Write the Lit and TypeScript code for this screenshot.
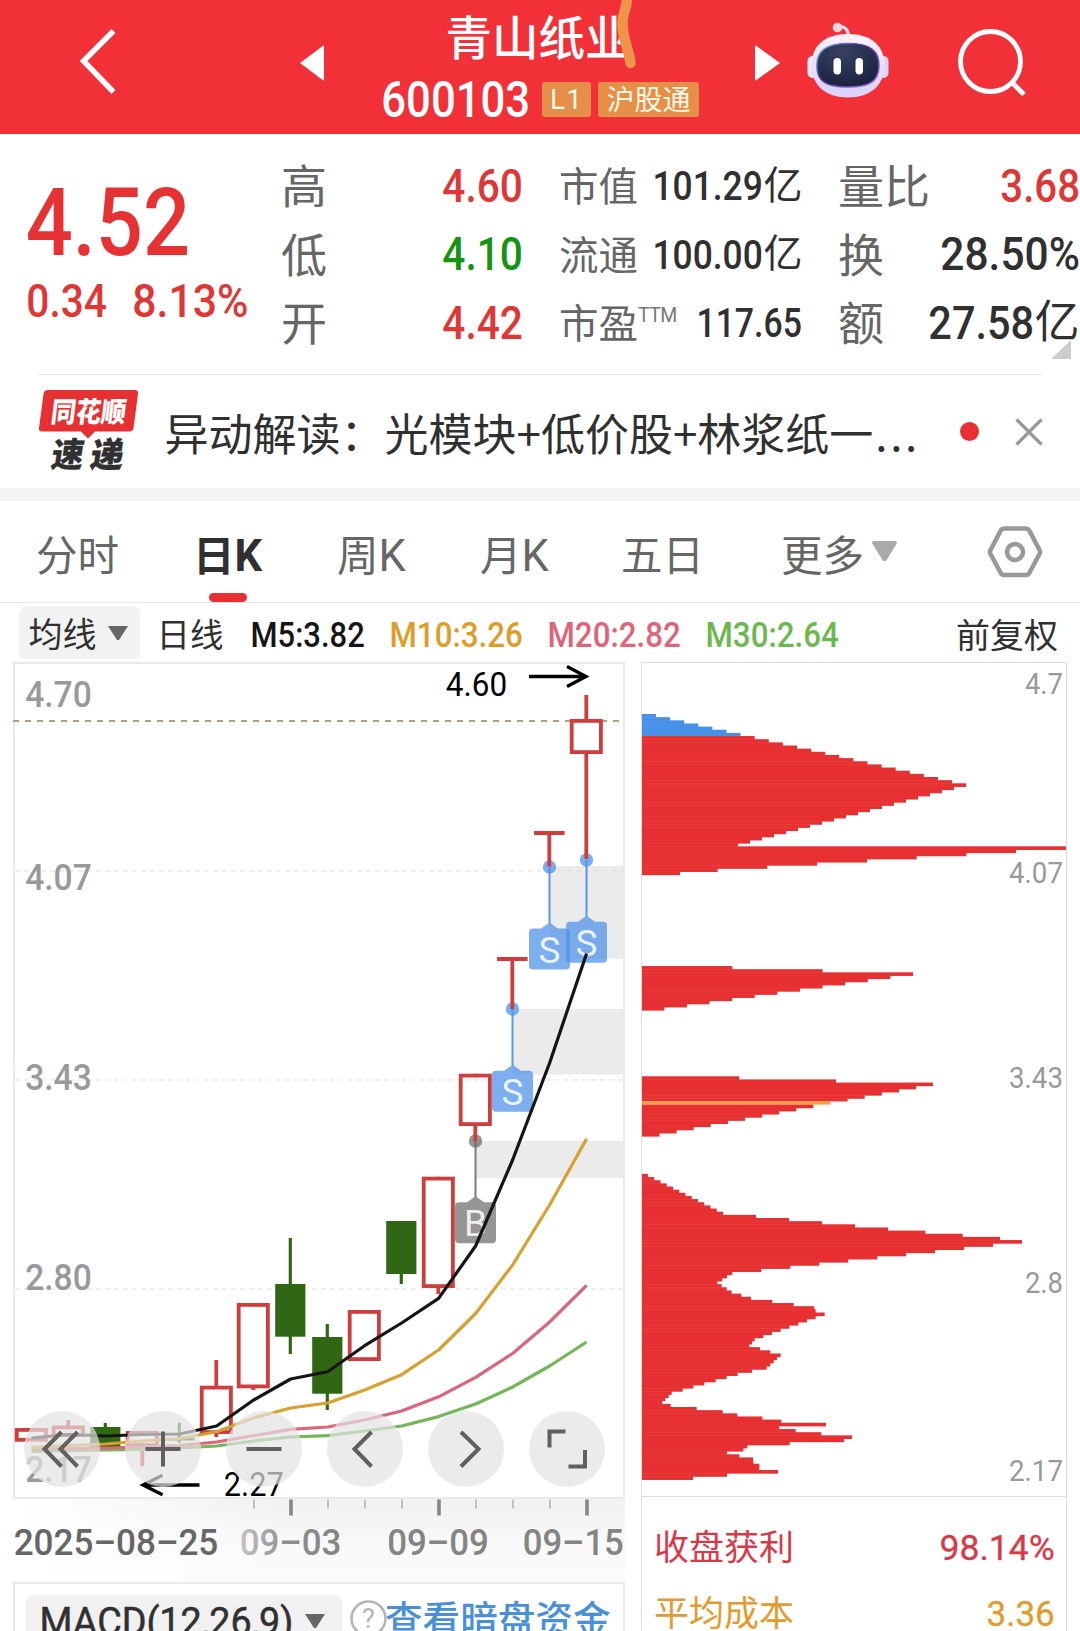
import { LitElement, html, svg, css } from "lit";
import { customElement } from "lit/decorators.js";

/* ---------- numerals: condensed figures fitted to a width and cap height ---------- */
const num = (text: string, w: number, cap: number, cls = "") => html`
  <svg class="num ${cls}" width=${w} height=${cap}>
    <text x=${-0.02 * cap} y=${cap} font-size=${cap / 0.711} textLength=${w + 0.05 * cap}
      lengthAdjust="spacingAndGlyphs">${text}</text>
  </svg>`;

const figure = (text: string, x: number, base: number, w: number, cap: number, cls: string) => svg`
  <text class=${cls} x=${x - 0.05 * cap} y=${base} font-size=${cap / 0.711}
    textLength=${w + 0.1 * cap} lengthAdjust="spacingAndGlyphs">${text}</text>`;

/* ---------- candle data (pixel space of the plot) ---------- */
const PITCH = 37;
const X0 = 31.3;
const cx = (i: number) => X0 + i * PITCH;

interface Candle { i: number; top: number; bottom: number; high: number; low: number; up: boolean; }
const candles: Candle[] = [
  { i: 0, top: 1428, bottom: 1441.7, high: 1428, low: 1441, up: true },
  { i: 1, top: 1425.5, bottom: 1437, high: 1420, low: 1437, up: true },
  { i: 2, top: 1427, bottom: 1447, high: 1423, low: 1447, up: false },
  { i: 3, top: 1431, bottom: 1447, high: 1431, low: 1466, up: true },
  { i: 4, top: 1438, bottom: 1440.5, high: 1422.7, low: 1442.7, up: false },
  { i: 5, top: 1385.7, bottom: 1434, high: 1360, low: 1437, up: true },
  { i: 6, top: 1303, bottom: 1388.3, high: 1303, low: 1390, up: true },
  { i: 7, top: 1284, bottom: 1336.7, high: 1238, low: 1354, up: false },
  { i: 8, top: 1337, bottom: 1393.7, high: 1324, low: 1410, up: false },
  { i: 9, top: 1310, bottom: 1361, high: 1310, low: 1361, up: true },
  { i: 10, top: 1221, bottom: 1274, high: 1221, low: 1284, up: false },
  { i: 11, top: 1176.7, bottom: 1288, high: 1176.7, low: 1294, up: true },
  { i: 12, top: 1073.7, bottom: 1126, high: 1073.7, low: 1141, up: true },
  { i: 15, top: 719, bottom: 754, high: 695, low: 859, up: true },
];
const limitUps = [
  { i: 13, y: 959, low: 1009 },
  { i: 14, y: 833, low: 866.5 },
];
const markers = [
  { i: 12, y: 1141, box: 1202.3, label: "B", sell: false },
  { i: 13, y: 1009, box: 1070.7, label: "S", sell: true },
  { i: 14, y: 867, box: 928.5, label: "S", sell: true },
  { i: 15, y: 860, box: 921.7, label: "S", sell: true },
];
const gaps = [
  { i: 12, y: 1141, h: 37 },
  { i: 13, y: 1009, h: 65.7 },
  { i: 14, y: 866, h: 92.7 },
];
const averages: Record<string, number[]> = {
  ma30: [1451.5, 1450.7, 1450, 1449.3, 1448, 1446, 1441, 1437, 1435.7, 1431, 1426, 1416.6, 1404, 1387, 1366, 1342],
  ma20: [1449, 1448.7, 1448, 1447, 1445.5, 1442, 1435.7, 1429.3, 1427, 1420, 1411, 1396.8, 1377.3, 1353.5, 1322, 1285.3],
  ma10: [1447.3, 1445.7, 1444, 1441, 1438.5, 1431.7, 1418, 1408, 1403, 1390, 1374.7, 1350, 1313.5, 1265, 1205, 1138.7],
  ma5: [1438, 1434.5, 1436, 1434.5, 1434, 1426, 1400, 1379, 1371.7, 1345.7, 1323, 1298.3, 1246, 1160, 1063, 953.5],
};

/* ---------- chip distribution: row index -> bar widths in thirds of a pixel ---------- */
const run = (from: number, step: number, n: number) => Array.from({ length: n }, (_, k) => from + step * k);
const chips: { row: number; ends: number[] }[] = [
  { row: 0, ends: [...run(78, 42.3, 23), ...run(972, -36, 19), 1308, 1158, 1009, 860, 711, 561, 412, 263, 150] },
  { row: 80, ends: [307, 578, 849, ...run(781, -67.8, 11)] },
  { row: 115, ends: [327, 618, 909, ...run(858, -51.3, 16)] },
  { row: 146, ends: [
    ...run(54, 18.75, 13), 378, 477, 576, 675, 774, 886, 998, 1110, 1176,
    ...run(1089, -86.9, 10), 291, 277, 262, 275, 290, 305, 334, 363, 427, 491, 553, 557, 584,
    557, 531, 505, 478, 452, 426, 400, 374, 366, 358, 390, 421, 452, 441, 431, 421, 410, 366,
    323, 290, 257, 223, 190, 158, 125, 116, 106, 96, 122, 200, 278, 322, 397, 454, 588, 447,
    497, 574, 666, 642, 479, 352, 340, 291, 328, 369, 370, 388, 388, 444, 291, 189] },
];
const CHIP_STEP = 3.15;
const AVG_ROW = 123;
const chipColor = (row: number) => (row < 7 ? "#4791ea" : row === AVG_ROW ? "#ff9f3b" : "#e73031");

@customElement("stock-header")
class StockHeader extends LitElement {
  static styles = css`
    :host { display: block; }
    .bar { display: flex; align-items: flex-start; height: 134px; background: #f23038; position: relative; overflow: hidden;
      font-family: "Noto Sans CJK SC", sans-serif; color: #fff; }
    svg { display: block; flex: none; overflow: visible; }
    .back { margin: 28px 0 0 78px; }
    .prev { margin: 45px 0 0 184px; }
    .name { width: 318px; margin-left: 58px; display: flex; flex-direction: column; align-items: center; }
    .title { font-size: 46.500px; font-weight: 500; line-height: 46px; margin: 12px 5px 0 0; white-space: nowrap; }
    .meta { display: flex; align-items: center; margin-top: 23px; width: 318px; }
    .num text { font-family: Roboto, sans-serif; font-weight: 500; fill: #fff; }
    .tag { background: #e58f49; border-radius: 3px; height: 35px; line-height: 33px; font-size: 28px; text-align: center; color: #fff8e6; }
    .l1 { width: 49px; margin-left: 13px; font-family: Roboto, sans-serif; letter-spacing: 1px; line-height: 36px; }
    .hk { width: 101px; margin-left: 7px; }
    .next { margin: 45px 0 0 55px; }
    .robot { margin: 20px 0 0 26.500px; }
    .search { margin: 26px 0 0 68px; }
    .scribble { position: absolute; left: 610px; top: 0; }
  `;
  render() {
    return html`<div class="bar">
      <svg class="back" width="38" height="66"><path d="M35.500 3 L5.500 33 L35.500 64" fill="none" stroke="#fff" stroke-width="5.500"/></svg>
      <svg class="prev" width="24" height="36"><path d="M24 0V36L0 18Z" fill="#fff"/></svg>
      <div class="name">
        <div class="title">青山纸业</div>
        <div class="meta">${num("600103", 147, 36)}
          <span class="tag l1">L1</span><span class="tag hk">沪股通</span></div>
      </div>
      <svg class="next" width="25" height="36"><path d="M0 0V36L25 18Z" fill="#fff"/></svg>
      <svg class="robot" width="82" height="80" viewBox="806.500 20 82 80">
        <defs>
          <linearGradient id="shell" x1="0" y1="0" x2="0" y2="1"><stop offset="0" stop-color="#fdf3fb"/><stop offset=".6" stop-color="#e3dcfa"/><stop offset="1" stop-color="#d9d2fa"/></linearGradient>
          <linearGradient id="rim" x1="0" y1="0" x2="1" y2="1"><stop offset="0" stop-color="#6fb7e0"/><stop offset=".4" stop-color="#4b3a9a"/><stop offset="1" stop-color="#9a6cf0"/></linearGradient>
          <radialGradient id="glass" cx=".4" cy=".2" r=".8"><stop offset="0" stop-color="#39415f"/><stop offset="1" stop-color="#19233f"/></radialGradient>
        </defs>
        <path d="M837 27 Q847 25 848 36" fill="none" stroke="#f7dcec" stroke-width="3.200"/>
        <circle cx="837" cy="27.500" r="4.800" fill="#fbd3de"/>
        <rect x="807" y="56" width="10" height="22" rx="5" fill="#efe6fb"/>
        <rect x="878" y="56" width="10" height="22" rx="5" fill="#e0d6f8"/>
        <path d="M847.500 34 C871 34 884 46 884 65 C884 86 869 97.500 847.500 97.500 C826 97.500 811 86 811 65 C811 46 824 34 847.500 34Z" fill="url(#shell)"/>
        <path d="M847.500 43.500C870 43.500 878.500 51 878.500 65.500C878.500 81 870 87 847.500 87C825 87 816.500 81 816.500 65.500C816.500 51 825 43.500 847.500 43.500Z" fill="url(#glass)" stroke="url(#rim)" stroke-width="1.600"/>
        <rect x="833" y="58" width="7.500" height="16.500" rx="3.700" fill="#fff"/>
        <rect x="855" y="58" width="7.500" height="16.500" rx="3.700" fill="#fff"/>
      </svg>
      <svg class="search" width="70" height="72" viewBox="956.500 26 70 72"><g fill="none" stroke="#fff" stroke-width="4.800"><circle cx="990" cy="61.500" r="30"/><path d="M1011 82L1023.500 94.500"/></g></svg>
      <svg class="scribble" width="40" height="72" viewBox="610 0 40 72"><path d="M627 -3 C627 8 623 12 622.500 22 C622 32 625 40 627 48 C629 54 630 58 630.500 63" fill="none" stroke="#f0934b" stroke-width="10.500" stroke-linecap="round"/></svg>
    </div>`;
  }
}

@customElement("stock-quote")
class StockQuote extends LitElement {
  static styles = css`
    :host { display: block; font-family: "Noto Sans CJK SC", sans-serif; color: #666; }
    svg { display: block; flex: none; overflow: visible; }
    .num text { font-family: Roboto, sans-serif; font-weight: 500; fill: #303030; }
    .num.red text { fill: #df3636; }
    .num.big text { fill: #e73233; }
    .num.green text { fill: #149314; }
    .panel { display: grid; grid-template-columns: 254px 240px 240px 240px; height: 240px; padding-left: 27px; position: relative; box-sizing: border-box; }
    .price { padding-top: 53px; }
    .change { display: flex; gap: 27px; margin-top: 29px; }
    .col { padding-top: 17px; }
    .c2 { margin-left: 39px; }
    .c3 { margin-left: 77px; }
    .row { display: flex; justify-content: space-between; align-items: center; height: 68.5px; width: 240px; }
    .c1 .row { width: 241px; }
    .c2 .row, .c3 .row { width: 240.500px; }
    .lab { font-size: 46px; line-height: 60px; margin-top: -4px; }
    .c2 .lab { font-size: 39.500px; margin: -2px 0 0 -1px; }
    .val { display: flex; align-items: center; }
    .yi { font-size: 39px; line-height: 50px; margin: -7px -2px 0 1px; color: #303030; }
    .c3 .yi { font-size: 45px; margin-right: -1px; }
    .ttm { font-family: Roboto, sans-serif; font-size: 19.500px; line-height: 22px; letter-spacing: -.6px; font-weight: 400; color: #777; margin-top: -12px; }
    .labs { display: flex; align-items: center; }
    .corner { position: absolute; right: 9px; top: 206px; }
    .rule { height: 1px; background: #e8e8e8; margin: 0 38px; }
  `;
  render() {
    const row = (l: unknown, v: unknown) => html`<div class="row"><span class="labs"><span class="lab">${l}</span></span><span class="val">${v}</span></div>`;
    return html`<div class="panel">
      <div class="price">${num("4.52", 161, 67.5, "big")}
        <div class="change">${num("0.34", 79, 33, "red")}${num("8.13%", 114.5, 33, "red")}</div></div>
      <div class="col c1">
        ${row("高", num("4.60", 79, 33, "red"))}${row("低", num("4.10", 79, 33, "green"))}${row("开", num("4.42", 79, 33, "red"))}
      </div>
      <div class="col c2">
        ${row("市值", html`${num("101.29", 109, 28.5)}<span class="yi">亿</span>`)}
        ${row("流通", html`${num("100.00", 109, 28.5)}<span class="yi">亿</span>`)}
        <div class="row"><span class="labs"><span class="lab">市盈</span><span class="ttm">TTM</span></span><span class="val">${num("117.65", 104, 28.5)}</span></div>
      </div>
      <div class="col c3">
        ${row("量比", num("3.68", 78, 33, "red"))}${row("换", num("28.50%", 138, 33))}
        ${row("额", html`${num("27.58", 104, 33)}<span class="yi">亿</span>`)}
      </div>
      <svg class="corner" width="20" height="19"><path d="M20 0V19H0Z" fill="#ccc"/></svg>
    </div><div class="rule"></div>`;
  }
}

@customElement("stock-news")
class StockNews extends LitElement {
  static styles = css`
    :host { display: block; font-family: "Noto Sans CJK SC", sans-serif; }
    .news { height: 113px; display: flex; align-items: center; padding-left: 38px; }
    svg { display: block; flex: none; overflow: visible; }
    .w { font: 900 28px "Noto Sans CJK SC", sans-serif; fill: #fff; }
    .d { font: 900 34px "Noto Sans CJK SC", sans-serif; fill: #303030; stroke: #303030; stroke-width: .3px; }
    .text { margin-left: 24.500px; width: 753.500px; font-size: 44px; line-height: 60px; color: #303030; white-space: nowrap; }
    .dots { letter-spacing: 2.6px; margin-left: 2px; }
    .dot { width: 19px; height: 19px; border-radius: 50%; background: #e73031; margin-left: 42px; }
    .x { margin-left: 36px; }
    .band { height: 13px; background: #f4f4f4; }
  `;
  render() {
    return html`<div class="news">
      <svg width="102" height="86" viewBox="38 389 102 86">
        <path d="M48 390H135Q138.500 390 138 394L133.500 428Q133 431.500 129 431.500H95L88 438.500L81 431.500H42Q38.500 431.500 39 428L43.500 394Q44 390 48 390Z" fill="#e73031"/>
        <text class="w" transform="translate(50 422) skewX(-7)" textLength="75" lengthAdjust="spacingAndGlyphs">同花顺</text>
        <text class="d" transform="translate(50 467) skewX(-9)" textLength="32" lengthAdjust="spacingAndGlyphs">速</text>
        <text class="d" transform="translate(89 467) skewX(-9)" textLength="33" lengthAdjust="spacingAndGlyphs">递</text>
      </svg>
      <div class="text">异动解读：光模块+低价股+林浆纸一<span class="dots">...</span></div>
      <div class="dot"></div>
      <svg class="x" width="28" height="28"><path d="M1.500 1.500L26.500 26.500M26.500 1.500L1.500 26.500" stroke="#999" stroke-width="3.200"/></svg>
    </div><div class="band"></div>`;
  }
}

@customElement("period-tabs")
class PeriodTabs extends LitElement {
  static styles = css`
    :host { display: block; font-family: Roboto, "Noto Sans CJK SC", sans-serif; }
    svg { display: block; flex: none; overflow: visible; }
    .tabs { display: flex; align-items: flex-start; height: 101px; padding-left: 36px; border-bottom: 1px solid #e4e4e4; font-size: 41.500px; color: #666; box-sizing: content-box; position: relative; }
    .tab { line-height: 62px; padding-top: 24.500px; white-space: nowrap; }
    .k { font-size: 43.500px; line-height: 1; }
    .t1 { width: 157px; } .t2 { width: 144px; color: #303030; font-weight: 700; } .t3 { width: 143px; } .t4 { width: 141px; } .t5 { width: 160px; }
    .t6 { width: 91px; }
    .arrow { margin-top: 40px; width: 25px; }
    .hex { margin: 24px 0 0 90px; }
    .ink { position: absolute; left: 209px; bottom: 0; width: 38px; height: 9px; border-radius: 4.500px; background: #e73031; }
    .num text { font-family: Roboto, sans-serif; font-weight: 500; }
    .ma { display: flex; align-items: flex-start; height: 59px; padding-left: 19px; box-sizing: border-box; }
    .btn { width: 121px; height: 53px; margin-top: 3px; background: #f2f2f2; border-radius: 7px; display: flex; align-items: center; gap: 11px; padding-left: 9.500px; box-sizing: border-box; }
    .cjk { font-size: 34px; line-height: 50px; color: #303030; white-space: nowrap; }
    .btn .cjk { margin-top: 4px; }
    .day { margin: 8px 0 0 16.500px; width: 94px; font-size: 33.500px; }
    .ma .num { margin-top: 18px; }
    .ma .n1 text { fill: #151515; } .ma .n2 text { fill: #dc9e28; } .ma .n3 text { fill: #de6478; } .ma .n4 text { fill: #6cb84f; }
    .n2, .n3, .n4 { margin-left: 26px; }
    .adj { margin: 7.500px 0 0 118.500px; }
  `;
  render() {
    return html`<div class="tabs">
      <span class="tab t1">分时</span><span class="tab t2">日<span class="k">K</span></span><span class="tab t3">周<span class="k">K</span></span><span class="tab t4">月<span class="k">K</span></span><span class="tab t5">五日</span><span class="tab t6">更多</span>
      <svg class="arrow" width="25" height="21"><path d="M1 0H24L25 2L14 20H11L0 2Z" fill="#aaa"/></svg>
      <svg class="hex" width="56" height="54" viewBox="987 525 56 54"><g fill="none" stroke="#999" stroke-width="4.600" stroke-linejoin="round"><path d="M1004 528.500H1026Q1028 528.500 1029 530L1039.500 550Q1040.500 552 1039.500 554L1029 573.500Q1028 575 1026 575H1004Q1002 575 1001 573.500L990.500 554Q989.500 552 990.500 550L1001 530Q1002 528.500 1004 528.500Z"/><circle cx="1015" cy="552" r="8"/></g></svg>
      <div class="ink"></div>
    </div>
    <div class="ma">
      <div class="btn"><span class="cjk">均线</span><svg width="20" height="14"><path d="M0 0H20L11 14H9Z" fill="#666"/></svg></div>
      <span class="cjk day">日线</span>
      ${num("M5:3.82", 113, 25.5, "n1")}${num("M10:3.26", 132, 25.5, "n2")}${num("M20:2.82", 132, 25.5, "n3")}${num("M30:2.64", 132, 25.5, "n4")}
      <span class="cjk adj">前复权</span>
    </div>`;
  }
}

@customElement("k-chart")
class KChart extends LitElement {
  static styles = css`
    :host { display: block; width: 641px; }
    svg { display: block; flex: none; }
    .plot { position: relative; margin-left: 13px; width: 612px; height: 837px; }
    text { font-family: Roboto, sans-serif; }
    .axis { fill: #999; font-weight: 500; }
    .note { fill: #000; }
    .mark { fill: #fff; fill-opacity: .85; text-anchor: middle; font-size: 37px; }
    .line { fill: none; stroke-width: 3.200px; stroke-linejoin: round; }
    .ma5 { stroke: #151515; } .ma10 { stroke: #d8a030; } .ma20 { stroke: #da6679; } .ma30 { stroke: #74b659; }
    .tools { position: absolute; left: 11px; top: 749px; display: flex; gap: 25px; }
    .tool { width: 76px; height: 76px; border-radius: 50%; background: rgba(226,226,226,.7); }
    .tool path { fill: none; stroke: #606060; stroke-width: 4px; }
    .time { height: 83px; margin-left: 13px; width: 612px;
      background: linear-gradient(90deg, #fff 0, rgba(255,255,255,0) 45%), linear-gradient(180deg, #f1f1f1 0, #fafafa 60%, #fbfbfb 100%); }
    .date { fill: #666; font-weight: 500; }
    .dim { fill: #848484; }
    .sub { box-sizing: border-box; margin-left: 13px; width: 612px; height: 52px; border: 2px solid #e9e9e9; border-bottom: 0; display: flex; padding: 11px 0 0 11px; position: relative; overflow: hidden; }
    .ind { flex: none; width: 316px; height: 50px; border-radius: 7px; background: #f1f1f1; display: flex; align-items: flex-start; box-sizing: border-box; padding: 12px 0 0 14px; gap: 12.500px; }
    .num { overflow: visible; }
    .num text { fill: #303030; font-weight: 400; stroke: #303030; stroke-width: .5px; }
    .ind .tri { margin-top: 6.500px; }
    .help { margin: 4px 0 0 7px; }
    .q { fill: #b5b5b5; text-anchor: middle; font-size: 27px; }
    .link { font: 500 37.600px/50px "Noto Sans CJK SC", sans-serif; color: #4a90d9; margin: -3px 0 0 -2px; white-space: nowrap; }
  `;
  render() {
    const tools = [
      "M37.500 21L20.500 38L37.500 55.500M53.500 21L36.500 38L53.500 55.500",
      "M20.500 38H55.500M38 20.500V55.500",
      "M20.500 38H55.500",
      "M44.500 21L27.500 38L44.500 55.500",
      "M33 21L50.500 38L33 55.500",
      "M36.500 20.500H20.500V36.500M56 39V55.500H39.500",
    ];
    return html`
      <div class="plot">
        <svg width="612" height="837" viewBox="13 662 612 837">
          ${[871, 1080, 1289].map((y) => svg`<path d="M15 ${y}H624" stroke="#dedede" stroke-width="1.200" stroke-dasharray="4.500 4.500"/>`)}
          ${gaps.map((g) => svg`<rect x=${cx(g.i)} y=${g.y} width=${625 - cx(g.i)} height=${g.h} fill="#ebebeb"/>`)}
          <rect x="14" y="663" width="610" height="835" fill="none" stroke="#e9e9e9" stroke-width="2"/>
          <path d="M549 871H624" stroke="#dedede" stroke-width="1.200" stroke-dasharray="4.500 4.500"/>
          <path d="M13 721H620" stroke="#b5a273" stroke-width="1.800" stroke-dasharray="6 6"/>
          ${figure("4.70", 26.5, 706.5, 64, 26, "axis")}${figure("4.07", 26.5, 889.5, 64, 26, "axis")}
          ${figure("3.43", 26.5, 1089.5, 64, 26, "axis")}${figure("2.80", 26.5, 1289.5, 64, 26, "axis")}${figure("2.17", 26.5, 1482, 64, 26, "axis")}
          ${markers.map((m) => {
            const x = cx(m.i) + 0.2, f = m.sell ? "#4f93ea" : "#707070";
            return svg`<path d="M${x} ${m.y}V${m.box - 5}" stroke=${m.sell ? "#5a97df" : "#7a7a7a"} stroke-width="2"/>
              <circle cx=${x} cy=${m.y} r="6.700" fill=${f} opacity=".75"/>
              <path d="M${x - 20.5} ${m.box + 4}q0 -4 4 -4h8l8.500 -6l8.500 6h8q4 0 4 4v33q0 4 -4 4h-33q-4 0 -4 -4Z" fill=${f} opacity=".74"/>
              <text class="mark" x=${x} y=${m.box + 34}>${m.label}</text>`;
          })}
          ${candles.map((c) => {
            const x = cx(c.i), col = c.up ? "#cf3e3e" : "#2f6714";
            return c.up
              ? svg`<path d="M${x} ${c.high}V${c.top + 1}M${x} ${c.bottom - 1}V${c.low}" stroke=${col} stroke-width="3.800"/>
                  <rect x=${x - 14.6} y=${c.top + 1.9} width="29.200" height=${c.bottom - c.top - 3.8} fill="none" stroke=${col} stroke-width="3.800"/>`
              : svg`<path d="M${x} ${c.high}V${c.low}" stroke=${col} stroke-width="3.200"/>
                  <rect x=${x - 15.1} y=${c.top} width="30.200" height=${c.bottom - c.top} fill=${col}/>`;
          })}
          ${limitUps.map((l) => svg`<path d="M${cx(l.i) - 15.3} ${l.y}H${cx(l.i) + 15.3}M${cx(l.i)} ${l.y}V${l.low}" stroke="#cf3e3e" stroke-width="3.800"/>`)}
          ${Object.entries(averages).map(([k, ys]) => svg`<polyline class="line ${k}" points=${ys.map((y, i) => `${cx(i) + 0.3},${y}`).join(" ")}/>`)}
          ${figure("4.60", 447, 696, 59, 23.3, "note")}
          <path d="M529 676.500H586M567 666.500L586 676.500L567 686.500" fill="none" stroke="#000" stroke-width="3.300"/>
          ${figure("2.27", 225, 1496, 57.5, 23, "note")}
          <path d="M199.500 1485H143M162.500 1475.300L143 1485L162.500 1494.700" fill="none" stroke="#000" stroke-width="3.300"/>
        </svg>
        <div class="tools">${tools.map((d) => html`<div class="tool"><svg width="76" height="76"><path d=${d}/></svg></div>`)}</div>
      </div>
      <div class="time">
        <svg width="612" height="83" viewBox="13 1498.500 612 83">
          <defs><linearGradient id="fade" gradientUnits="objectBoundingBox"><stop offset="0" stop-color="#c4c4c4"/><stop offset=".45" stop-color="#8e8e8e"/><stop offset="1" stop-color="#848484"/></linearGradient></defs>
          ${[6, 8, 9, 10, 12, 13, 14].map((i) => svg`<path d="M${cx(i) + 0.7} 1499V1508" stroke="#c0c0c0" stroke-width="2"/>`)}
          ${[7, 11, 15].map((i) => svg`<path d="M${cx(i) + 0.7} 1499V1515" stroke="#868686" stroke-width="3.600"/>`)}
          ${figure("2025–08–25", 15, 1554.3, 202, 26.5, "date")}
          <g fill="url(#fade)" font-weight="500">${figure("09–03", 241, 1554.3, 99, 26.5, "")}</g>
          ${figure("09–09", 388.5, 1554.3, 99, 26.5, "date dim")}${figure("09–15", 524, 1554.3, 98.5, 26.5, "date dim")}
        </svg>
      </div>
      <div class="sub">
        <div class="ind">${num("MACD(12,26,9)", 252.5, 28)}<svg class="tri" width="20" height="14"><path d="M0 0H20L11 14H9Z" fill="#666"/></svg></div>
        <svg class="help" width="38" height="38"><circle cx="19.500" cy="19.500" r="17" fill="none" stroke="#b5b5b5" stroke-width="2.600"/><text class="q" x="19.500" y="29">?</text></svg>
        <span class="link">查看暗盘资金</span>
      </div>`;
  }
}

@customElement("chip-chart")
class ChipChart extends LitElement {
  static styles = css`
    :host { display: block; width: 426px; }
    svg { display: block; }
    .box { border: 1px solid #dcdcdc; width: 424px; }
    .lab { fill: #999; font-family: Roboto, sans-serif; }
    .stats { border-top: 1px solid #dcdcdc; padding: 17px 12px 0 12px; height: 140px; }
    .row { display: flex; justify-content: space-between; align-items: center; height: 66px; font: 35px/50px "Noto Sans CJK SC", sans-serif; }
    .row span { margin-top: -4px; }
    .num { overflow: visible; }
    .num text { font-family: Roboto, sans-serif; font-weight: 400; stroke-width: .3px; }
    .a { color: #d93849; } .a text { fill: #d93849; stroke: #d93849; }
    .b { color: #e29b2c; } .b text { fill: #e29b2c; stroke: #e29b2c; }
  `;
  render() {
    return html`<div class="box">
      <svg width="424" height="833" viewBox="642 663 424 833">
        ${chips.map((g) => g.ends.map((e, k) => {
          const r = g.row + k;
          const over = r === AVG_ROW || r === AVG_ROW - 1 || r === 6 ? 0 : 0.5;
          return svg`<rect x="642" y=${714 + r * CHIP_STEP} width=${e / 3 - 12} height=${CHIP_STEP + over} fill=${chipColor(r)}/>`;
        }))}
        ${figure("4.7", 1026, 694, 36, 20.5, "lab")}${figure("4.07", 1010, 882.7, 52, 20.5, "lab")}
        ${figure("3.43", 1010, 1088, 52, 20.5, "lab")}${figure("2.8", 1026, 1293, 36, 20.5, "lab")}${figure("2.17", 1010, 1480.7, 52, 20.5, "lab")}
      </svg>
      <div class="stats">
        <div class="row a"><span>收盘获利</span>${num("98.14%", 114, 25.5)}</div>
        <div class="row b"><span>平均成本</span>${num("3.36", 67, 25.5)}</div>
      </div>
    </div>`;
  }
}

@customElement("app-root")
class AppRoot extends LitElement {
  static styles = css`
    :host { display: block; width: 1080px; height: 1631px; overflow: hidden; background: #fff; }
    .charts { display: flex; }
  `;
  render() {
    return html`<stock-header></stock-header><stock-quote></stock-quote><stock-news></stock-news><period-tabs></period-tabs>
      <div class="charts"><k-chart></k-chart><chip-chart></chip-chart></div>`;
  }
}
